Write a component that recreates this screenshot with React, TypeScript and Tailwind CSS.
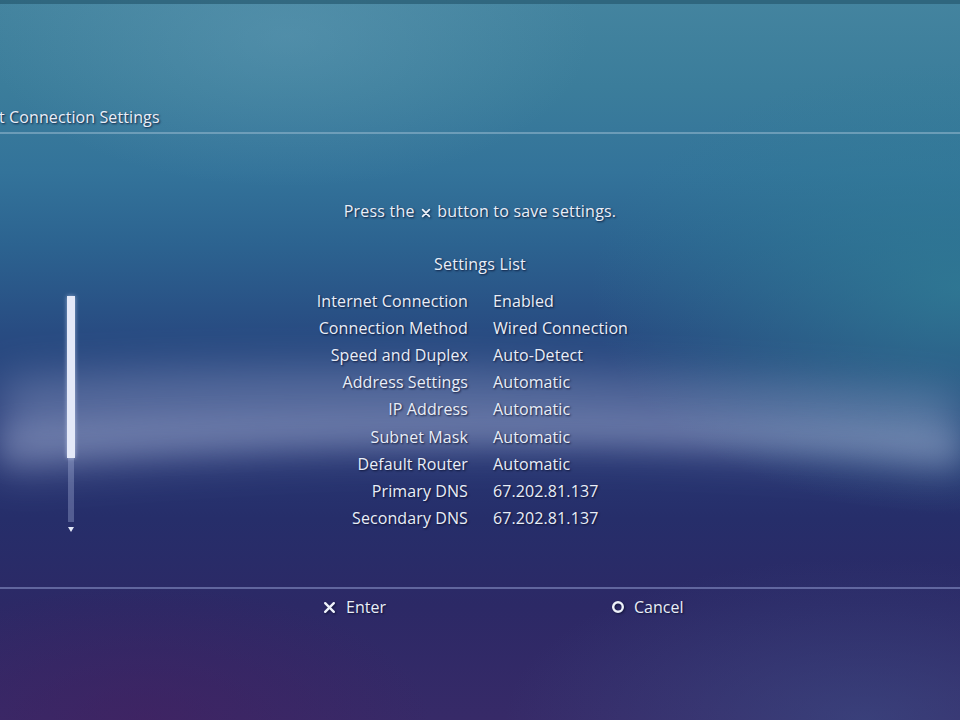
const settings = [
  { label: "Internet Connection", value: "Enabled" },
  { label: "Connection Method", value: "Wired Connection" },
  { label: "Speed and Duplex", value: "Auto-Detect" },
  { label: "Address Settings", value: "Automatic" },
  { label: "IP Address", value: "Automatic" },
  { label: "Subnet Mask", value: "Automatic" },
  { label: "Default Router", value: "Automatic" },
  { label: "Primary DNS", value: "67.202.81.137" },
  { label: "Secondary DNS", value: "67.202.81.137" },
];

const glow = "[text-shadow:1px_1px_2px_rgba(5,10,40,0.8)]";

function CrossIcon({ size = 12 }: { size?: number }) {
  return (
    <svg width={size} height={size} viewBox="0 0 12 12" className="drop-shadow-[1px_1px_1px_rgba(5,10,40,0.7)]">
      <path d="M2 2 L10 10 M10 2 L2 10" stroke="#eef2fa" strokeWidth="2.2" strokeLinecap="round" />
    </svg>
  );
}

function CircleIcon() {
  return (
    <svg width="14" height="14" viewBox="0 0 14 14" className="drop-shadow-[1px_1px_1px_rgba(5,10,40,0.7)]">
      <circle cx="7" cy="7" r="4.8" fill="none" stroke="#eef2fa" strokeWidth="2.4" />
    </svg>
  );
}

// the soft light wave that crosses the backdrop
function Wave() {
  return (
    <svg className="absolute inset-0" width="960" height="720" viewBox="0 0 960 720">
      <defs>
        <filter id="soft" x="-20%" y="-50%" width="140%" height="200%">
          <feGaussianBlur stdDeviation="22" />
        </filter>
        <filter id="edge" x="-20%" y="-50%" width="140%" height="200%">
          <feGaussianBlur stdDeviation="12" />
        </filter>
      </defs>
      <path
        d="M0 380 C250 362 600 368 960 395 L960 472 C720 442 420 432 0 472 Z"
        fill="#c8d4f0"
        opacity="0.3"
        filter="url(#soft)"
      />
      <path
        d="M0 425 C260 410 600 410 960 430 L960 468 C720 442 420 434 0 466 Z"
        fill="#d0daf5"
        opacity="0.17"
        filter="url(#edge)"
      />
    </svg>
  );
}

export default function App() {
  return (
    <div
      className="relative h-[720px] w-[960px] overflow-hidden bg-[linear-gradient(180deg,#44849f_0%,#3b7d9b_12%,#33739a_24%,#2c6390_34%,#284c82_46%,#283c78_58%,#262e6a_72%,#2c2966_84%,#372a68_100%)] text-[#e9eef8]"
      style={{ fontFamily: '"Open Sans", "Liberation Sans", sans-serif' }}
    >
      {/* colour washes on top of the base gradient */}
      <div className="absolute inset-0 bg-[radial-gradient(ellipse_55%_45%_at_100%_40%,rgba(48,128,150,0.75),transparent_70%)]" />
      <div className="absolute inset-0 bg-[radial-gradient(ellipse_45%_30%_at_30%_5%,rgba(110,165,190,0.35),transparent_70%)]" />
      <div className="absolute inset-0 bg-[radial-gradient(ellipse_50%_30%_at_90%_100%,rgba(60,85,140,0.5),transparent_75%)]" />
      <div className="absolute inset-0 bg-[radial-gradient(ellipse_40%_25%_at_15%_100%,rgba(70,30,95,0.5),transparent_75%)]" />
      <Wave />

      <div className="relative flex h-full flex-col">
        <div className="h-[4px] bg-[#275a70]/70" />

        <div className="flex h-[130px] flex-col justify-end">
          <div className={`-ml-[56px] pb-[4px] text-[16px] leading-[22px] tracking-[0.1px] ${glow}`}>
            Internet Connection Settings
          </div>
          <div className="h-[2px] bg-[#8fb4cc]/60" />
        </div>

        <div className="flex h-[453px] flex-col">
          <p className={`mt-[66px] text-center text-[16px] leading-[22px] tracking-[0.2px] ${glow}`}>
            <span>Press the </span>
            <span className="inline-flex px-[2px] align-[-1px]">
              <CrossIcon size={10} />
            </span>
            <span> button to save settings.</span>
          </p>
          <p className={`mt-[31px] text-center text-[16px] leading-[22px] tracking-[0.2px] ${glow}`}>Settings List</p>

          <div className="mt-[13px] flex">
            {/* scroll bar */}
            <div className="ml-[67px] mt-[8px] flex w-[8px] flex-col items-center">
              <div className="h-[162px] w-[8px] bg-[#e4e9f8] shadow-[0_0_4px_rgba(220,230,255,0.6)]" />
              <div className="h-[64px] w-[6px] bg-[#aab4de]/35" />
              <div className="mt-[5px] h-0 w-0 border-x-[3px] border-t-[5px] border-x-transparent border-t-[#e4e9f8]" />
            </div>

            <div className="grid grid-cols-[393px_1fr] gap-x-[25px] text-[16px] leading-[27px] tracking-[0.1px]">
              {settings.map((row) => (
                <div key={row.label} className="contents">
                  <span className={`text-right ${glow}`}>{row.label}</span>
                  <span className={glow}>{row.value}</span>
                </div>
              ))}
            </div>
          </div>
        </div>

        {/* footer with button hints */}
        <div className="h-[2px] bg-[#8e98cc]/55" />
        <div className="flex pl-[323px] pt-[7px] text-[16px] leading-[22px]">
          <div className="flex w-[288px] items-center gap-[10px]">
            <CrossIcon size={13} />
            <span className={glow}>Enter</span>
          </div>
          <div className="flex items-center gap-[9px]">
            <CircleIcon />
            <span className={glow}>Cancel</span>
          </div>
        </div>
      </div>
    </div>
  );
}
